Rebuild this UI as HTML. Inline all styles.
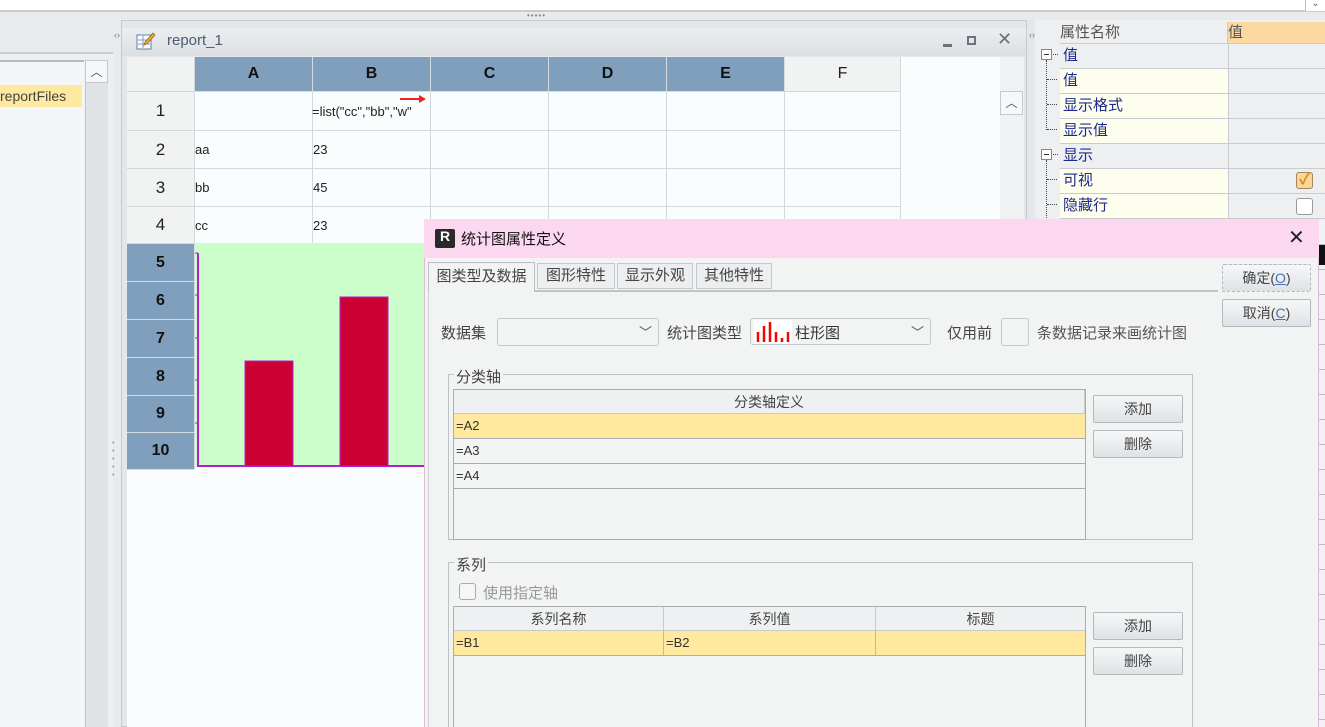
<!DOCTYPE html>
<html style="width:1325px;height:727px;overflow:hidden"><head><meta charset="utf-8"><style>
*{box-sizing:border-box;margin:0;padding:0}
html,body{overflow:hidden}
body{width:1325px;height:727px;overflow:hidden;background:#e9eaec;font-family:"Liberation Sans","Noto Sans CJK SC",sans-serif;font-size:14px;color:#222;position:relative}
.a{position:absolute}
.hc{background:#7f9fbd;border-right:1px solid #d6dbe0;border-bottom:1px solid #d6dbe0;font-weight:bold;font-size:16px;text-align:center;color:#111}
.rh{background:#f1f2f2;border-right:1px solid #d5d8da;border-bottom:1px solid #d5d8da;text-align:center;font-size:17px;color:#222}
.prow{border-bottom:1px solid #c8ccd0;height:25px;font-size:15px;color:#1d2a8c;line-height:24px;padding-left:3px}
.btn{background:linear-gradient(#f6f7f8,#dfe2e5);border:1px solid #b5b9bd;border-radius:2px;text-align:center;font-size:14px;color:#444;line-height:26px}
.dlg{color:#444}
.th{background:#eef0f1;border-right:1px solid #c8cbce;border-bottom:1px solid #c8cbce;text-align:center;font-size:14px;color:#444;line-height:24px}
.tr{background:#f3f4f4;border-bottom:1px solid #a9adb1;font-size:13px;line-height:24px;padding-left:2px;color:#333}
.y{background:#fee99f}
</style></head><body>
<div class="a" style="left:0;top:0;width:1325px;height:12px;background:#fff;border-bottom:2px solid #c9cdd1"></div>
<div class="a" style="left:1305px;top:0;width:20px;height:11px;background:#fff;border-left:1px solid #bbb;font-size:10px;color:#666;text-align:center;line-height:8px">⌄</div>
<div class="a" style="left:527px;top:14px;width:40px;height:4px;font-size:8px;color:#888;letter-spacing:1px;line-height:4px">•••••</div>
<div class="a" style="left:0;top:52px;width:113px;height:675px;background:#eceef0;border-top:2px solid #c9cdd1"></div>
<div class="a" style="left:0;top:60px;width:84px;height:667px;background:#f4f5f6;border-top:2px solid #b9bdc1"></div>
<div class="a" style="left:0;top:85px;width:82px;height:22px;background:#fde99f;font-size:14px;line-height:22px;color:#444">reportFiles</div>
<div class="a" style="left:85px;top:60px;width:23px;height:667px;background:#dfe2e6;border-left:1px solid #c5c9cd"></div>
<div class="a" style="left:85px;top:60px;width:23px;height:23px;background:#f6f7f8;border:1px solid #c5c9cd;text-align:center;font-size:12px;color:#555;line-height:22px">︿</div>
<div class="a" style="left:114px;top:30px;width:6px;height:20px;font-size:9px;color:#777">‹›</div>
<div class="a" style="left:112px;top:440px;width:6px;height:50px;font-size:7px;color:#999;line-height:8px">•<br>•<br>•<br>•<br>•</div>
<div class="a" style="left:121px;top:20px;width:906px;height:707px;background:#e4e6e9;border:1px solid #c6cacd"></div>
<div class="a" style="left:122px;top:28px;width:904px;height:28px;background:linear-gradient(#eceef0,#dcdfe2)"></div>
<svg class="a" style="left:135px;top:30px" width="22" height="22" viewBox="0 0 22 22"><rect x="2" y="5" width="14" height="14" fill="#fff" stroke="#5b7fa8"/><path d="M3 10h12M3 14h12M8 6v12" stroke="#7d9cc0"/><path d="M10 12l8-9 2 2-8 9-3 1z" fill="#e8a93a" stroke="#8a5a1a" stroke-width=".7"/></svg>
<div class="a" style="left:167px;top:32px;font-size:15px;color:#4b5d72">report_1</div>
<div class="a" style="left:943px;top:44px;width:9px;height:3px;background:#6a737c"></div>
<div class="a" style="left:967px;top:36px;width:9px;height:9px;border:2px solid #6a737c"></div>
<div class="a" style="left:997px;top:29px;font-size:18px;color:#6a737c">✕</div>
<div class="a" style="left:127px;top:57px;width:873px;height:670px;background:#f9fdfd"></div>
<div class="a" style="left:1000px;top:57px;width:24px;height:670px;background:#eff1f3"></div>
<div class="a" style="left:1000px;top:91px;width:23px;height:24px;background:#f6f7f8;border:1px solid #c5c9cd;text-align:center;font-size:12px;color:#555;line-height:22px">︿</div>
<div class="a rh" style="left:127px;top:57px;width:68px;height:35px"></div>
<div class="a hc" style="left:195px;top:57px;width:118px;height:35px;line-height:34px">A</div>
<div class="a hc" style="left:313px;top:57px;width:118px;height:35px;line-height:34px">B</div>
<div class="a hc" style="left:431px;top:57px;width:118px;height:35px;line-height:34px">C</div>
<div class="a hc" style="left:549px;top:57px;width:118px;height:35px;line-height:34px">D</div>
<div class="a hc" style="left:667px;top:57px;width:118px;height:35px;line-height:34px">E</div>
<div class="a rh" style="left:785px;top:57px;width:116px;height:35px;line-height:34px;font-size:16px">F</div>
<div class="a rh" style="left:127px;top:92px;width:68px;height:39px;line-height:38px">1</div>
<div class="a rh" style="left:127px;top:131px;width:68px;height:38px;line-height:37px">2</div>
<div class="a rh" style="left:127px;top:169px;width:68px;height:38px;line-height:37px">3</div>
<div class="a rh" style="left:127px;top:207px;width:68px;height:37px;line-height:36px">4</div>
<div class="a" style="left:195px;top:92px;width:706px;height:152px;background:repeating-linear-gradient(90deg,transparent 0 117px,#d5d8da 117px 118px)"></div>
<div class="a" style="left:195px;top:130px;width:706px;height:1px;background:#d5d8da"></div>
<div class="a" style="left:195px;top:168px;width:706px;height:1px;background:#d5d8da"></div>
<div class="a" style="left:195px;top:206px;width:706px;height:1px;background:#d5d8da"></div>
<div class="a" style="left:900px;top:92px;width:1px;height:152px;background:#d5d8da"></div>
<div class="a" style="left:312px;top:104px;font-size:13px">=list("cc","bb","w"</div>
<div class="a" style="left:400px;top:98px;width:24px;height:2px;background:#e22"></div>
<div class="a" style="left:419px;top:95px;width:0;height:0;border-left:7px solid #e22;border-top:4px solid transparent;border-bottom:4px solid transparent"></div>
<div class="a" style="left:195px;top:142px;font-size:13px">aa</div><div class="a" style="left:313px;top:142px;font-size:13px">23</div>
<div class="a" style="left:195px;top:180px;font-size:13px">bb</div><div class="a" style="left:313px;top:180px;font-size:13px">45</div>
<div class="a" style="left:195px;top:218px;font-size:13px">cc</div><div class="a" style="left:313px;top:218px;font-size:13px">23</div>
<div class="a hc" style="left:127px;top:244px;width:68px;height:38px;line-height:37px">5</div>
<div class="a hc" style="left:127px;top:282px;width:68px;height:38px;line-height:37px">6</div>
<div class="a hc" style="left:127px;top:320px;width:68px;height:38px;line-height:37px">7</div>
<div class="a hc" style="left:127px;top:358px;width:68px;height:38px;line-height:37px">8</div>
<div class="a hc" style="left:127px;top:396px;width:68px;height:37px;line-height:36px">9</div>
<div class="a hc" style="left:127px;top:433px;width:68px;height:37px;line-height:36px">10</div>
<div class="a" style="left:195px;top:243px;width:230px;height:224px;background:#ccfecc"></div>
<svg class="a" style="left:195px;top:243px" width="230" height="230"><path d="M3 10V223H230" stroke="#b41fd0" stroke-width="2" fill="none"/><path d="M0 10h3M0 52h3M0 95h3M0 137h3M0 180h3" stroke="#b41fd0"/><rect x="50" y="118" width="48" height="105" fill="#cc0033" stroke="#b41fd0"/><rect x="145" y="54" width="48" height="169" fill="#cc0033" stroke="#b41fd0"/></svg>
<div class="a" style="left:1027px;top:20px;width:8px;height:707px;background:#e4e6e9"></div>
<div class="a" style="left:1029px;top:30px;font-size:9px;color:#777">‹›</div>
<div class="a" style="left:1035px;top:20px;width:290px;height:200px;background:#eeeff0"></div>
<div class="a" style="left:1060px;top:22px;width:168px;height:22px;font-size:15px;color:#555;line-height:22px;border-right:1px solid #c8ccd0;border-bottom:1px solid #c8ccd0">属性名称</div>
<div class="a" style="left:1228px;top:22px;width:97px;height:22px;background:#fbd9a0;font-size:15px;line-height:22px;color:#555;border-bottom:1px solid #c8ccd0">值</div>
<div class="a" style="left:1060px;top:44px;width:168px">
<div class="prow" style="background:#eeeff0">值</div>
<div class="prow" style="background:#fefeee">值</div>
<div class="prow" style="background:#fefeee">显示格式</div>
<div class="prow" style="background:#fefeee">显示值</div>
<div class="prow" style="background:#eeeff0">显示</div>
<div class="prow" style="background:#fefeee">可视</div>
<div class="prow" style="background:#fefeee">隐藏行</div>
</div>
<div class="a" style="left:1228px;top:44px;width:97px;height:175px;background:repeating-linear-gradient(#eeeff0 0 24px,#c8ccd0 24px 25px);border-left:1px solid #c8ccd0"></div>
<div class="a" style="left:1041px;top:49px;width:11px;height:11px;border:1px solid #4a9bbf;background:#fff"><div style="margin:4px 2px;height:1px;background:#333"></div></div>
<div class="a" style="left:1041px;top:149px;width:11px;height:11px;border:1px solid #4a9bbf;background:#fff"><div style="margin:4px 2px;height:1px;background:#333"></div></div>
<div class="a" style="left:1046px;top:60px;height:70px;border-left:1px dotted #444"></div>
<div class="a" style="left:1046px;top:160px;height:60px;border-left:1px dotted #444"></div>
<div class="a" style="left:1053px;top:54px;width:5px;border-top:1px dotted #444"></div>
<div class="a" style="left:1047px;top:79px;width:10px;border-top:1px dotted #444"></div>
<div class="a" style="left:1047px;top:104px;width:10px;border-top:1px dotted #444"></div>
<div class="a" style="left:1047px;top:129px;width:10px;border-top:1px dotted #444"></div>
<div class="a" style="left:1053px;top:154px;width:5px;border-top:1px dotted #444"></div>
<div class="a" style="left:1047px;top:179px;width:10px;border-top:1px dotted #444"></div>
<div class="a" style="left:1047px;top:204px;width:10px;border-top:1px dotted #444"></div>
<div class="a" style="left:1296px;top:172px;width:17px;height:17px;border:1px solid #a8875a;border-radius:3px;background:#f7d79c;color:#e08a00;font-size:15px;line-height:14px;text-align:center;font-weight:bold">✓</div>
<div class="a" style="left:1296px;top:198px;width:17px;height:17px;border:1px solid #999;border-radius:3px;background:#fff"></div>
<div class="a" style="left:1318px;top:220px;width:7px;height:507px;background:repeating-linear-gradient(#f0f1f2 0 24px,#bbb 24px 25px)"></div>
<div class="a" style="left:1319px;top:245px;width:6px;height:20px;background:#111"></div>
<div class="a dlg" style="left:424px;top:219px;width:895px;height:508px;background:#f2f3f3;border-left:1px solid #e4b9d8;border-right:1px solid #e4b9d8"></div>
<div class="a" style="left:424px;top:219px;width:895px;height:39px;background:#fcd8f0"></div>
<div class="a" style="left:435px;top:229px;width:20px;height:19px;background:#2a2a2a;border-radius:2px;color:#fff;font-weight:bold;font-size:14px;line-height:15px;text-align:center">R</div>
<div class="a" style="left:461px;top:228px;font-size:15px;color:#111">统计图属性定义</div>
<div class="a" style="left:1288px;top:225px;font-size:20px;color:#222;font-weight:300">✕</div>
<div class="a" style="left:428px;top:290px;width:790px;height:437px;border-top:2px solid #c0c4c8;border-left:1px solid #d0d3d6"></div>
<div class="a" style="left:428px;top:262px;width:107px;height:30px;background:#f2f3f3;border:1px solid #bcc0c4;border-bottom:none;font-size:15px;line-height:27px;text-align:center;color:#444">图类型及数据</div>
<div class="a" style="left:537px;top:263px;width:78px;height:26px;background:#eceeef;border:1px solid #c6c9cc;font-size:15px;line-height:24px;text-align:center;color:#444">图形特性</div>
<div class="a" style="left:617px;top:263px;width:76px;height:26px;background:#eceeef;border:1px solid #c6c9cc;font-size:15px;line-height:24px;text-align:center;color:#444">显示外观</div>
<div class="a" style="left:696px;top:263px;width:76px;height:26px;background:#eceeef;border:1px solid #c6c9cc;font-size:15px;line-height:24px;text-align:center;color:#444">其他特性</div>
<div class="a btn" style="left:1222px;top:264px;width:89px;height:28px;border-style:dashed">确定(<span style="color:#4a72b8;text-decoration:underline">O</span>)</div>
<div class="a btn" style="left:1222px;top:299px;width:89px;height:28px">取消(<span style="color:#4a72b8;text-decoration:underline">C</span>)</div>
<div class="a" style="left:441px;top:322px;font-size:15px;color:#444">数据集</div>
<div class="a" style="left:497px;top:318px;width:162px;height:28px;background:#f2f3f3;border:1px solid #c5c9cd;border-radius:3px"><span style="position:absolute;right:6px;top:3px;font-size:13px;color:#555">﹀</span></div>
<div class="a" style="left:667px;top:322px;font-size:15px;color:#444">统计图类型</div>
<div class="a" style="left:750px;top:318px;width:181px;height:27px;background:#f2f3f3;border:1px solid #c5c9cd;border-radius:3px"><span style="position:absolute;right:6px;top:3px;font-size:13px;color:#555">﹀</span>
<svg style="position:absolute;left:3px;top:1px" width="38" height="24"><rect width="38" height="24" fill="#fff"/><path d="M4 22v-10M10 22v-16M16 22v-20M22 22v-10M28 22v-4M34 22v-10" stroke="#f00" stroke-width="2.5"/></svg>
<span style="position:absolute;left:44px;top:3px;font-size:15px;color:#333">柱形图</span></div>
<div class="a" style="left:947px;top:322px;font-size:15px;color:#444">仅用前</div>
<div class="a" style="left:1001px;top:318px;width:28px;height:28px;border:1px solid #c5c9cd;border-radius:3px"></div>
<div class="a" style="left:1037px;top:322px;font-size:15px;color:#555">条数据记录来画统计图</div>
<div class="a" style="left:448px;top:374px;width:745px;height:166px;border:1px solid #bfc2c5"></div>
<div class="a" style="left:454px;top:366px;background:#f2f3f3;padding:0 2px;font-size:15px;color:#444">分类轴</div>
<div class="a" style="left:453px;top:389px;width:633px;height:151px;background:#f3f4f4;border:1px solid #a9adb1"></div>
<div class="a th" style="left:454px;top:390px;width:631px;height:24px">分类轴定义</div>
<div class="a tr y" style="left:454px;top:414px;width:631px;height:25px">=A2</div>
<div class="a tr" style="left:454px;top:439px;width:631px;height:25px">=A3</div>
<div class="a tr" style="left:454px;top:464px;width:631px;height:25px">=A4</div>
<div class="a btn" style="left:1093px;top:395px;width:90px;height:28px">添加</div>
<div class="a btn" style="left:1093px;top:430px;width:90px;height:28px">删除</div>
<div class="a" style="left:448px;top:562px;width:745px;height:165px;border:1px solid #bfc2c5;border-bottom:none"></div>
<div class="a" style="left:454px;top:554px;background:#f2f3f3;padding:0 2px;font-size:15px;color:#444">系列</div>
<div class="a" style="left:459px;top:583px;width:17px;height:17px;border:1px solid #aaa;border-radius:3px;background:#f6f6f6"></div>
<div class="a" style="left:483px;top:582px;font-size:15px;color:#999">使用指定轴</div>
<div class="a" style="left:453px;top:606px;width:633px;height:121px;background:#f3f4f4;border:1px solid #a9adb1;border-bottom:none"></div>
<div class="a th" style="left:454px;top:607px;width:210px;height:24px">系列名称</div>
<div class="a th" style="left:664px;top:607px;width:212px;height:24px">系列值</div>
<div class="a th" style="left:876px;top:607px;width:209px;height:24px;border-right:none">标题</div>
<div class="a tr y" style="left:454px;top:631px;width:210px;height:25px;border-right:1px solid #b8bbbe">=B1</div>
<div class="a tr y" style="left:664px;top:631px;width:212px;height:25px;border-right:1px solid #b8bbbe">=B2</div>
<div class="a tr y" style="left:876px;top:631px;width:209px;height:25px"></div>
<div class="a btn" style="left:1093px;top:612px;width:90px;height:28px">添加</div>
<div class="a btn" style="left:1093px;top:647px;width:90px;height:28px">删除</div>
</body></html>
